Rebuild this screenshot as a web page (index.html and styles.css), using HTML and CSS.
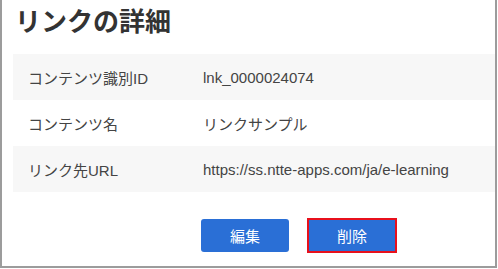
FILE: index.html
```html
<!DOCTYPE html>
<html lang="ja">
<head>
  <meta charset="UTF-8">
  <title>リンクの詳細</title>
  <link rel="stylesheet" href="styles.css">
</head>
<body>
<div class="frame">
  <h1>リンクの詳細</h1>
  <div class="detail">
    <div class="row">
      <div class="label">コンテンツ識別ID</div>
      <div class="value">lnk_0000024074</div>
    </div>
    <div class="row">
      <div class="label">コンテンツ名</div>
      <div class="value">リンクサンプル</div>
    </div>
    <div class="row">
      <div class="label">リンク先URL</div>
      <div class="value">https://ss.ntte-apps.com/ja/e-learning</div>
    </div>
  </div>
  <div class="actions">
    <button type="button" class="btn">編集</button>
    <button type="button" class="btn marked">削除</button>
  </div>
</div>
</body>
</html>
```

FILE: styles.css
```css
body {
  margin: 0;
  font-family: "Liberation Sans", "Noto Sans CJK JP", sans-serif;
  background: #fff;
}
.frame {
  width: 493px;
  height: 266px;
  border: 2px solid #9c9c9c;
  border-top: none;
  overflow: hidden;
}
h1 {
  margin: 0;
  padding: 1px 0 0 13px;
  font-size: 26px;
  line-height: 37px;
  font-weight: bold;
  color: #333;
  font-family: "Noto Sans CJK JP", sans-serif;
}
.detail {
  margin: 16px 0 0 11px;
}
.row {
  display: flex;
  align-items: center;
  height: 46px;
  font-size: 15px;
  color: #444;
}
.row:nth-child(odd) {
  background: #f7f7f7;
}
.label {
  width: 175px;
  padding-left: 15px;
}
.actions {
  display: flex;
  gap: 19px;
  margin-top: 27px;
  padding-left: 199px;
}
.btn {
  width: 88px;
  height: 33px;
  border: none;
  border-radius: 3px;
  background: #2a6fd6;
  color: #fff;
  font-size: 15px;
  font-family: "Noto Sans CJK JP", sans-serif;
}
.marked {
  border-radius: 0;
  outline: 2px solid #e8101c;
  outline-offset: -1px;
}
```
